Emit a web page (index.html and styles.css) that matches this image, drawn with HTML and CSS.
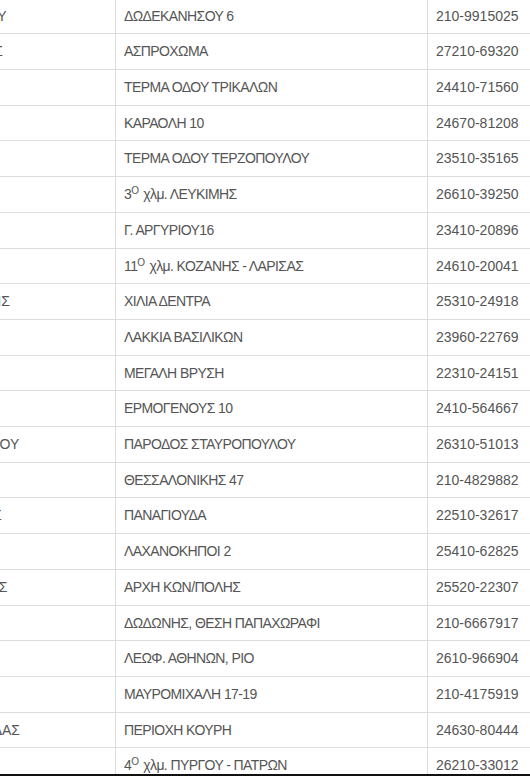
FILE: index.html
```html
<!DOCTYPE html>
<html lang="el">
<head>
<meta charset="utf-8">
<title>ΚΤΕΟ</title>
<link rel="stylesheet" href="styles.css">
</head>
<body>
<div class="viewport">
  <table class="list">
    <colgroup>
      <col class="c-city">
      <col class="c-addr">
      <col class="c-tel">
    </colgroup>
    <tbody>
      <tr><td>Π. ΦΑΛΗΡΟΥ</td><td class="addr">ΔΩΔΕΚΑΝΗΣΟΥ 6</td><td>210-9915025</td></tr>
      <tr><td>ΚΑΛΑΜΑΤΑΣ</td><td class="addr">ΑΣΠΡΟΧΩΜΑ</td><td>27210-69320</td></tr>
      <tr><td>ΚΑΡΔΙΤΣΑΣ</td><td class="addr">ΤΕΡΜΑ ΟΔΟΥ ΤΡΙΚΑΛΩΝ</td><td>24410-71560</td></tr>
      <tr><td>ΚΑΣΤΟΡΙΑΣ</td><td class="addr">ΚΑΡΑΟΛΗ 10</td><td>24670-81208</td></tr>
      <tr><td>ΚΑΤΕΡΙΝΗΣ</td><td class="addr">ΤΕΡΜΑ ΟΔΟΥ ΤΕΡΖΟΠΟΥΛΟΥ</td><td>23510-35165</td></tr>
      <tr><td>ΚΕΡΚΥΡΑΣ</td><td class="addr">3<sup>Ο</sup> χλμ. ΛΕΥΚΙΜΗΣ</td><td>26610-39250</td></tr>
      <tr><td>ΚΙΛΚΙΣ</td><td class="addr">Γ. ΑΡΓΥΡΙΟΥ16</td><td>23410-20896</td></tr>
      <tr><td>ΚΟΖΑΝΗΣ</td><td class="addr">11<sup>Ο</sup> χλμ. ΚΟΖΑΝΗΣ - ΛΑΡΙΣΑΣ</td><td>24610-20041</td></tr>
      <tr><td>ΚΟΜΟΤΗΝΗΣ</td><td class="addr">ΧΙΛΙΑ ΔΕΝΤΡΑ</td><td>25310-24918</td></tr>
      <tr><td>ΒΑΣΙΛΙΚΩΝ</td><td class="addr">ΛΑΚΚΙΑ ΒΑΣΙΛΙΚΩΝ</td><td>23960-22769</td></tr>
      <tr><td>ΛΑΜΙΑΣ</td><td class="addr">ΜΕΓΑΛΗ ΒΡΥΣΗ</td><td>22310-24151</td></tr>
      <tr><td>ΛΑΡΙΣΑΣ</td><td class="addr">ΕΡΜΟΓΕΝΟΥΣ 10</td><td>2410-564667</td></tr>
      <tr><td>ΜΕΣΟΛΟΓΓΙΟΥ</td><td class="addr">ΠΑΡΟΔΟΣ ΣΤΑΥΡΟΠΟΥΛΟΥ</td><td>26310-51013</td></tr>
      <tr><td>ΜΟΣΧΑΤΟΥ</td><td class="addr">ΘΕΣΣΑΛΟΝΙΚΗΣ 47</td><td>210-4829882</td></tr>
      <tr><td>ΜΥΤΙΛΗΝΗΣ</td><td class="addr">ΠΑΝΑΓΙΟΥΔΑ</td><td>22510-32617</td></tr>
      <tr><td>ΞΑΝΘΗΣ</td><td class="addr">ΛΑΧΑΝΟΚΗΠΟΙ 2</td><td>25410-62825</td></tr>
      <tr><td>ΟΡΕΣΤΙΑΔΑΣ</td><td class="addr">ΑΡΧΗ ΚΩΝ/ΠΟΛΗΣ</td><td>25520-22307</td></tr>
      <tr><td>ΠΑΛΛΗΝΗΣ</td><td class="addr">ΔΩΔΩΝΗΣ, ΘΕΣΗ ΠΑΠΑΧΩΡΑΦΙ</td><td>210-6667917</td></tr>
      <tr><td>ΠΑΤΡΑΣ</td><td class="addr">ΛΕΩΦ. ΑΘΗΝΩΝ, ΡΙΟ</td><td>2610-966904</td></tr>
      <tr><td>ΠΕΙΡΑΙΑ</td><td class="addr">ΜΑΥΡΟΜΙΧΑΛΗ 17-19</td><td>210-4175919</td></tr>
      <tr><td>ΠΤΟΛΕΜΑΙΔΑΣ</td><td class="addr">ΠΕΡΙΟΧΗ ΚΟΥΡΗ</td><td>24630-80444</td></tr>
      <tr><td>ΠΥΡΓΟΥ</td><td class="addr">4<sup>Ο</sup> χλμ. ΠΥΡΓΟΥ - ΠΑΤΡΩΝ</td><td>26210-33012</td></tr>
    </tbody>
  </table>
</div>
</body>
</html>
```
FILE: styles.css
```css
html, body {
  margin: 0;
  padding: 0;
  background: #fff;
  overflow: hidden;
}

.viewport {
  height: 774px;
  overflow: hidden;
  border-bottom: 2px solid #111;
}

.list {
  border-collapse: collapse;
  table-layout: fixed;
  width: 640px;
  margin-left: -89px;
  margin-top: -2.4px;
  font-family: "Liberation Sans", Arial, sans-serif;
  font-size: 14px;
  color: #555;
}

.c-city { width: 204px; }
.c-addr { width: 312px; }
.c-tel { width: 124px; }

.list td {
  border: 1px solid #ddd;
  padding: 8px;
  line-height: 18.7px;
  white-space: nowrap;
  overflow: hidden;
  vertical-align: top;
}

.list td.addr {
  letter-spacing: -0.6px;
}

.list sup {
  font-size: 10px;
  line-height: 0;
  vertical-align: 5px;
  letter-spacing: 0;
  margin-right: 1px;
}
```
